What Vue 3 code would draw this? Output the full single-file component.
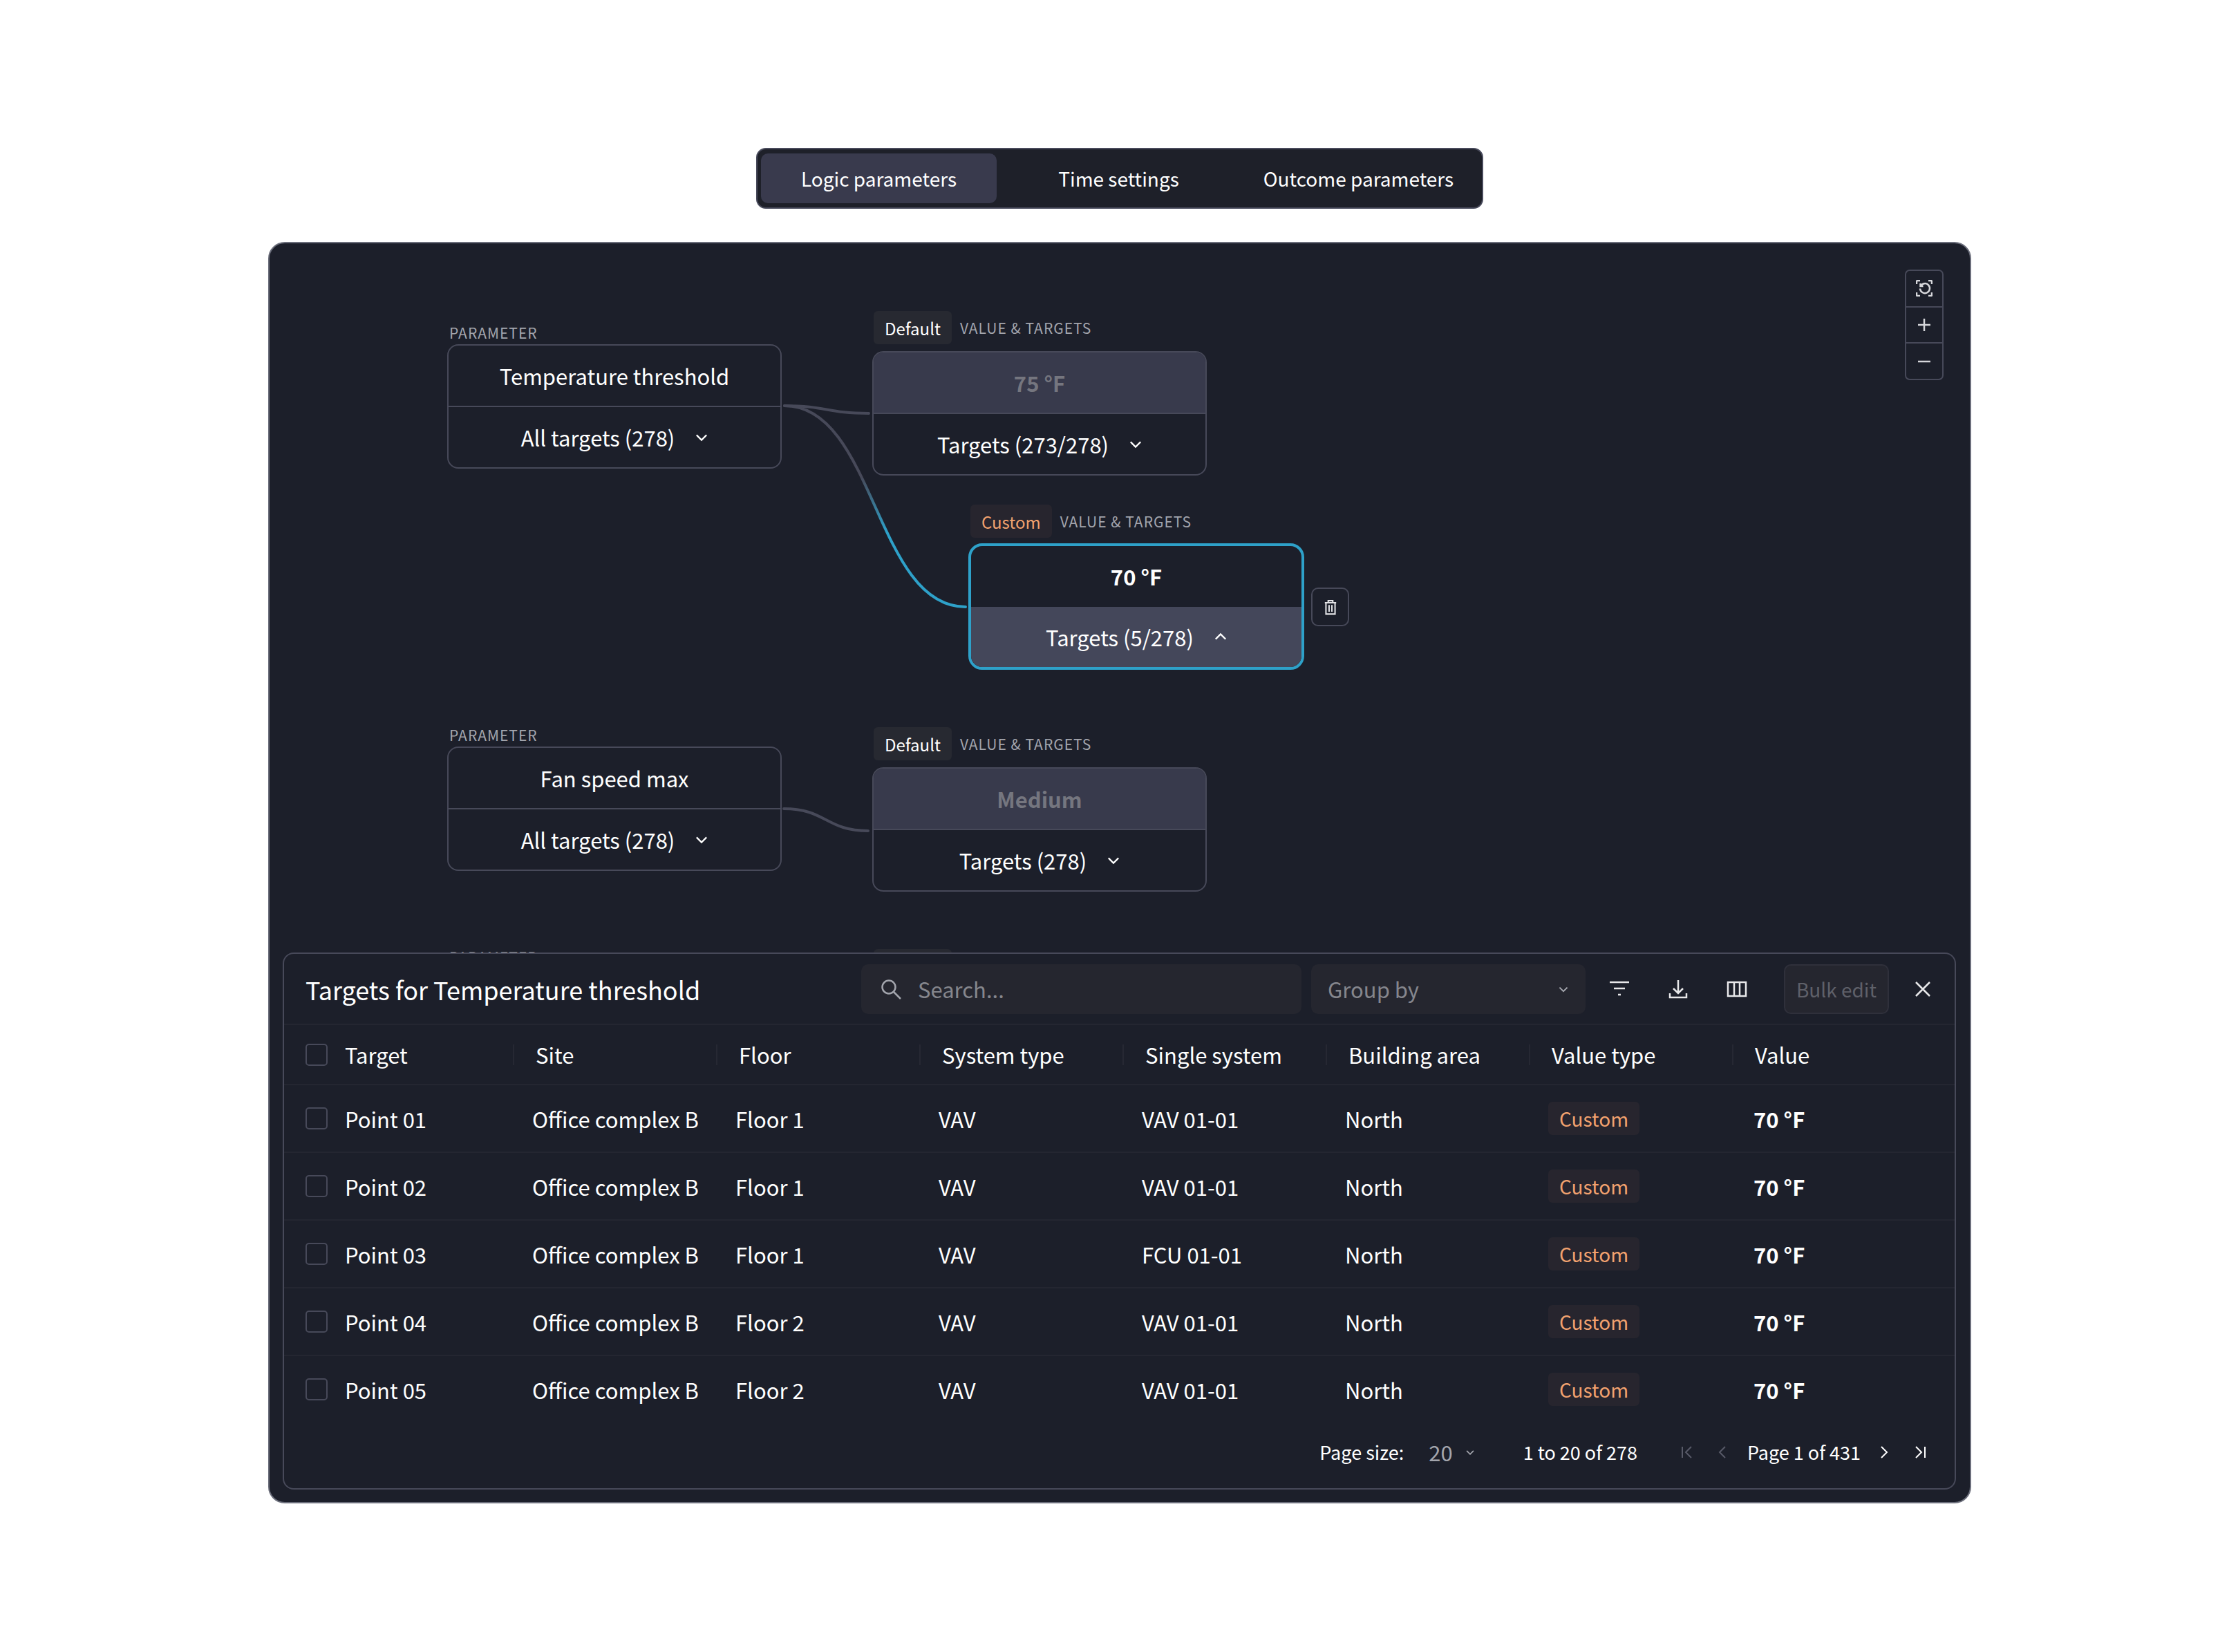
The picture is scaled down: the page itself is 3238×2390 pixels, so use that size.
<template>
  <div class="page">
    <div class="tabs">
      <div
        v-for="(tab, tabIdx) in tabs"
        :key="tab"
        class="tab"
        :class="{ active: tabIdx === 0 }"
      >
        {{ tab }}
      </div>
    </div>

    <div class="canvas">
      <!-- links between nodes, coordinates are page pixels -->
      <svg class="links" viewBox="390 352 2460 1821">
        <defs>
          <linearGradient id="linkFade" gradientUnits="userSpaceOnUse" x1="0" y1="690" x2="0" y2="770">
            <stop offset="0" stop-color="#474959" />
            <stop offset="1" stop-color="#2ea1c9" />
          </linearGradient>
        </defs>
        <path d="M1135 587C1196 587 1196 598 1257 598" class="link" />
        <path d="M1135 587C1266 587 1266 878 1397 878" class="link" stroke="url(#linkFade)" />
        <path d="M1134 1170C1195 1170 1195 1202 1256 1202" class="link" />
      </svg>

      <div
        v-for="param in params"
        :key="param.top"
        class="node-wrap param"
        :style="{ top: param.top + 'px' }"
      >
        <div class="caption">PARAMETER</div>
        <div class="node">
          <div class="node-row">{{ param.name }}</div>
          <div class="node-row">
            {{ param.targets }}
            <svg class="chev" viewBox="0 0 20 20"><path d="M2 6l8 8 8-8" /></svg>
          </div>
        </div>
      </div>

      <div
        v-for="item in values"
        :key="item.top"
        class="node-wrap value"
        :class="{ custom: item.custom }"
        :style="{ top: item.top + 'px', left: item.left + 'px' }"
      >
        <div class="value-head">
          <span class="tag" :class="{ orange: item.custom }">{{ item.custom ? 'Custom' : 'Default' }}</span>
          <span class="caption">VALUE &amp; TARGETS</span>
        </div>
        <div class="node">
          <div class="node-row value-row">{{ item.value }}</div>
          <div class="node-row">
            {{ item.targets }}
            <svg class="chev" :class="{ up: item.custom }" viewBox="0 0 20 20"><path d="M2 6l8 8 8-8" /></svg>
          </div>
        </div>
      </div>

      <div class="trash">
        <svg viewBox="0 0 24 28" width="20" height="23">
          <path d="M2 6h20M8 6V2.5h8V6M4 6v20h16V6M9.5 10v12M14.5 10v12" />
        </svg>
      </div>

      <div class="zoom-controls">
        <div class="zoom-btn">
          <svg viewBox="0 0 24 24" width="24" height="24">
            <path d="M1 6V2.5A1.5 1.5 0 0 1 2.500 1H6M18 1h3.500A1.500 1.500 0 0 1 23 2.500V6M23 18v3.500a1.500 1.500 0 0 1-1.500 1.500H18M6 23H2.500A1.500 1.500 0 0 1 1 21.500V18" />
            <path d="M7 8.500a7 7 0 1 1-1 4M6.500 5v4h4" />
          </svg>
        </div>
        <div class="zoom-btn">
          <svg viewBox="0 0 20 20" width="20" height="20"><path d="M10 1v18M1 10h18" /></svg>
        </div>
        <div class="zoom-btn">
          <svg viewBox="0 0 20 20" width="20" height="20"><path d="M1 10h18" /></svg>
        </div>
      </div>

      <div class="drawer">
        <div class="toolbar">
          <div class="title">Targets for Temperature threshold</div>
          <div class="search">
            <svg viewBox="0 0 30 30" width="30" height="30">
              <circle cx="12" cy="12" r="9.500" />
              <path d="M19 19l10 10" />
            </svg>
            <span>Search...</span>
          </div>
          <div class="group-by">
            <span>Group by</span>
            <svg class="chev small" viewBox="0 0 20 20"><path d="M3 7l7 7 7-7" /></svg>
          </div>
          <svg class="tool" viewBox="0 0 30 30">
            <path d="M1 5h28M7 14h16M13 23h4" />
          </svg>
          <svg class="tool" viewBox="0 0 30 30">
            <path d="M15 2v19M8 14l7 7 7-7M3 21v6h24v-6" />
          </svg>
          <svg class="tool" viewBox="0 0 30 30">
            <path d="M2 5h26v20H2zM11 5v20M19 5v20" />
          </svg>
          <div class="bulk">Bulk edit</div>
          <svg class="tool close" viewBox="0 0 24 24">
            <path d="M2 2l20 20M22 2L2 22" />
          </svg>
        </div>

        <div class="row head">
          <div class="cell first">
            <span class="check"></span>
            <span>Target</span>
          </div>
          <div v-for="col in columns" :key="col" class="cell">{{ col }}</div>
        </div>

        <div class="rows">
          <div v-for="row in rows" :key="row.name" class="row">
            <div class="cell first">
              <span class="check"></span>
              <span>{{ row.name }}</span>
            </div>
            <div class="cell">Office complex B</div>
            <div class="cell">{{ row.floor }}</div>
            <div class="cell">VAV</div>
            <div class="cell">{{ row.system }}</div>
            <div class="cell">North</div>
            <div class="cell"><span class="tag orange slim">Custom</span></div>
            <div class="cell strong">70 °F</div>
          </div>
        </div>

        <div class="footer">
          <span>Page size:</span>
          <span class="size">20</span>
          <svg class="pager-chev" viewBox="0 0 20 20"><path d="M3 7l7 7 7-7" /></svg>
          <span class="range">1 to 20 of 278</span>
          <svg class="pager dim first-page" viewBox="0 0 20 20"><path d="M3 2v16M16 2l-8 8 8 8" /></svg>
          <svg class="pager dim prev-page" viewBox="0 0 20 20"><path d="M13 2l-8 8 8 8" /></svg>
          <span>Page 1 of 431</span>
          <svg class="pager next-page" viewBox="0 0 20 20"><path d="M7 2l8 8-8 8" /></svg>
          <svg class="pager last-page" viewBox="0 0 20 20"><path d="M4 2l8 8-8 8M17 2v16" /></svg>
        </div>
      </div>
    </div>
  </div>
</template>

<script setup>
const tabs = ["Logic parameters", "Time settings", "Outcome parameters"];

const params = [
  { top: 117, name: "Temperature threshold", targets: "All targets (278)" },
  { top: 699, name: "Fan speed max", targets: "All targets (278)" },
  { top: 1020, name: "", targets: "" },
];

const values = [
  { top: 98, left: 872, value: "75 °F", targets: "Targets (273/278)" },
  { top: 378, left: 1011, value: "70 °F", targets: "Targets (5/278)", custom: true },
  { top: 700, left: 872, value: "Medium", targets: "Targets (278)" },
  { top: 1021, left: 872, value: "", targets: "" },
];

const columns = [
  "Site",
  "Floor",
  "System type",
  "Single system",
  "Building area",
  "Value type",
  "Value",
];

const rows = [
  { name: "Point 01", floor: "Floor 1", system: "VAV 01-01" },
  { name: "Point 02", floor: "Floor 1", system: "VAV 01-01" },
  { name: "Point 03", floor: "Floor 1", system: "FCU 01-01" },
  { name: "Point 04", floor: "Floor 2", system: "VAV 01-01" },
  { name: "Point 05", floor: "Floor 2", system: "VAV 01-01" },
];
</script>

<style>
body {
  background: #fff;
}
</style>

<style scoped>
.page {
  width: 3238px;
  height: 2390px;
  box-sizing: border-box;
  padding: 214px 0 0 2px;
  display: flex;
  flex-direction: column;
  align-items: center;
  gap: 48px;
  font-family: "Noto Sans CJK SC", "Noto Sans", sans-serif;
  color: #fff;
  font-size: 31px;
}
svg {
  fill: none;
  stroke: currentColor;
  stroke-width: 2.5;
  flex: none;
}

.tabs {
  width: 1052px;
  height: 88px;
  box-sizing: border-box;
  display: flex;
  gap: 6px;
  padding: 6px 8px 6px 5px;
  background: #1e2029;
  border: 2px solid #484a5b;
  border-radius: 14px;
}
.tab {
  flex: 1;
  display: flex;
  align-items: center;
  justify-content: center;
  border-radius: 10px;
  font-size: 28px;
}
.tab.active {
  background: #393a4d;
}

.canvas {
  position: relative;
  width: 2464px;
  height: 1825px;
  box-sizing: border-box;
  background: #1c1f2a;
  border: 2px solid #6b6e7b;
  border-radius: 24px;
  overflow: hidden;
}
.links {
  position: absolute;
  inset: 0;
  width: 2460px;
  height: 1821px;
}
.link {
  stroke: #474959;
  stroke-width: 4;
  stroke-linecap: round;
}
.link[stroke] {
  stroke: url(#linkFade);
}

.node-wrap {
  position: absolute;
  width: 484px;
}
.param {
  left: 257px;
}
.caption {
  font-size: 21px;
  line-height: 24px;
  letter-spacing: 1px;
  color: #a3a5ad;
  margin: 0 0 5px 3px;
}
.node {
  box-sizing: border-box;
  height: 180px;
  display: flex;
  flex-direction: column;
  border: 2px solid #474959;
  border-radius: 16px;
  overflow: hidden;
}
.node-row {
  flex: 1;
  display: flex;
  align-items: center;
  justify-content: center;
  font-size: 31px;
}
.node-row + .node-row {
  border-top: 2px solid #474959;
}
.chev {
  width: 18px;
  height: 18px;
  margin-left: 30px;
}
.chev.up {
  transform: rotate(180deg);
}

.value-head {
  display: flex;
  align-items: center;
  gap: 12px;
  height: 48px;
  margin: 0 0 10px 2px;
}
.value-head .caption {
  margin: 0;
}
.tag {
  box-sizing: border-box;
  height: 48px;
  padding: 0 16px;
  display: inline-flex;
  align-items: center;
  background: #272931;
  border-radius: 6px;
  font-size: 24px;
}
.tag.orange {
  background: #27252e;
  color: #f2a26f;
}
.value-row {
  background: #383a4c;
  color: #75767f;
  font-weight: 700;
}
.custom {
  width: 486px;
}
.custom .value-head {
  margin: 0 0 8px 3px;
}
.custom .node {
  height: 183px;
  border: 4px solid #2ea1c9;
  border-radius: 20px;
}
.custom .value-row {
  background: transparent;
  color: #fff;
}
.custom .node-row + .node-row {
  background: #44475a;
  border-top: 0;
}

.trash {
  position: absolute;
  left: 1507px;
  top: 498px;
  width: 55px;
  height: 56px;
  box-sizing: border-box;
  border: 2px solid #474959;
  border-radius: 10px;
  display: flex;
  align-items: center;
  justify-content: center;
  color: #e2e3e6;
}

.zoom-controls {
  position: absolute;
  left: 2366px;
  top: 38px;
  width: 56px;
  height: 160px;
  box-sizing: border-box;
  border: 2px solid #474959;
  border-radius: 7px;
  display: flex;
  flex-direction: column;
  color: #d6d7db;
}
.zoom-btn {
  flex: 1;
  display: flex;
  align-items: center;
  justify-content: center;
}
.zoom-btn + .zoom-btn {
  border-top: 2px solid #474959;
}

.drawer {
  position: absolute;
  left: 19px;
  right: 20px;
  bottom: 18px;
  height: 777px;
  box-sizing: border-box;
  display: flex;
  flex-direction: column;
  background: #1c1f2a;
  border: 2px solid #474959;
  border-radius: 16px;
}
.toolbar {
  height: 103px;
  flex: none;
  box-sizing: border-box;
  display: flex;
  align-items: center;
  padding-left: 31px;
  border-bottom: 2px solid #242631;
}
.title {
  width: 804px;
  font-size: 36px;
}
.search,
.group-by {
  box-sizing: border-box;
  height: 72px;
  display: flex;
  align-items: center;
  background: #25262f;
  border-radius: 10px;
  color: #85868d;
}
.search {
  width: 637px;
  padding-left: 28px;
  gap: 24px;
  margin-right: 14px;
}
.search svg {
  color: #a3a5ad;
}
.group-by {
  width: 397px;
  padding: 0 24px;
  justify-content: space-between;
  margin-right: 34px;
}
.chev.small {
  width: 16px;
  height: 16px;
  margin: 0;
  color: #a3a5ad;
}
.tool {
  width: 30px;
  height: 30px;
  margin-right: 55px;
  color: #e8e8ea;
}
.bulk {
  box-sizing: border-box;
  width: 152px;
  height: 72px;
  margin-left: -2px;
  display: flex;
  align-items: center;
  justify-content: center;
  background: #25262f;
  border: 2px solid #2f303b;
  border-radius: 10px;
  color: #5f6069;
  font-size: 28px;
}
.tool.close {
  width: 24px;
  height: 24px;
  margin: 0 0 0 37px;
}

.row {
  display: grid;
  grid-template-columns: 331px repeat(7, 294px);
  height: 98px;
  box-sizing: border-box;
  border-bottom: 2px solid #242631;
}
.row.head {
  flex: none;
  height: 87px;
}
.rows {
  height: 478px;
  flex: none;
  overflow: hidden;
}
.cell {
  display: flex;
  align-items: center;
  padding-left: 28px;
}
.cell.first {
  padding-left: 31px;
  gap: 25px;
}
.head .cell {
  padding-left: 33px;
  position: relative;
}
.head .cell.first {
  padding-left: 31px;
}
.head .cell + .cell::before {
  content: "";
  position: absolute;
  left: 0;
  top: 28px;
  height: 30px;
  width: 2px;
  background: #262833;
}
.check {
  width: 32px;
  height: 32px;
  box-sizing: border-box;
  border: 2px solid #474959;
  border-radius: 5px;
}
.tag.slim {
  height: 48px;
  padding: 0 16px;
  font-size: 28px;
}
.strong {
  font-weight: 700;
  padding-left: 31px;
}

.footer {
  flex: 1;
  display: flex;
  align-items: center;
  justify-content: flex-end;
  padding-right: 40px;
  font-size: 27px;
}
.size {
  margin-left: 36px;
  font-size: 31px;
  color: #a3a5ad;
}
.pager-chev {
  width: 14px;
  height: 14px;
  margin: 0 0 0 18px;
  color: #a3a5ad;
}
.range {
  margin: 0 62px 0 70px;
}
.pager {
  width: 20px;
  height: 20px;
  stroke-width: 2;
}
.pager.dim {
  color: #585a68;
}
.first-page {
  margin-right: 32px;
}
.prev-page {
  margin-right: 25px;
}
.next-page {
  margin: 0 33px 0 23px;
}
</style>
